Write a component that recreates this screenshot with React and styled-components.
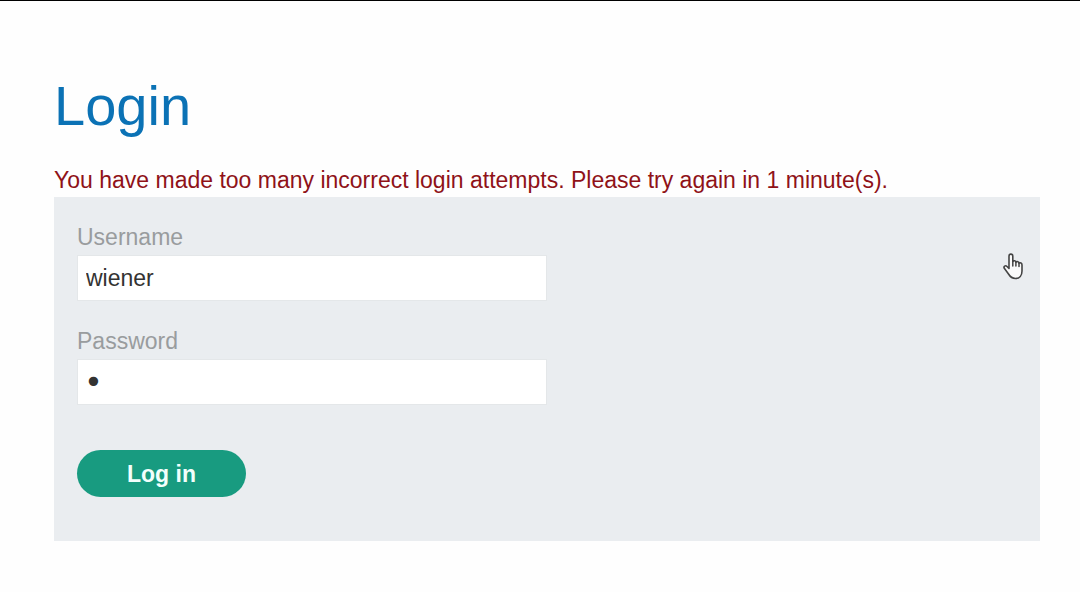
import React from 'react';
import styled, { createGlobalStyle } from 'styled-components';

const GlobalStyle = createGlobalStyle`
  *, *::before, *::after { box-sizing: border-box; }
  body {
    margin: 0;
    background: #fefefe;
    color: #333332;
    font-family: "Liberation Sans", Arial, sans-serif;
    font-size: 23px;
    line-height: 26px;
  }
`;

const Page = styled.main`
  border-top: 1px solid #000;
  padding: 73px 40px 50px 54px;
`;

const Title = styled.h1`
  margin: 0 0 29px;
  color: #0b72b5;
  font-size: 56px;
  font-weight: 400;
  line-height: 64px;
`;

const Warning = styled.p`
  margin: 0 0 4px;
  color: #8f1218;
`;

const Panel = styled.section`
  position: relative;
  background: #eaedf0;
  padding: 27px 23px 44px;
`;

const Form = styled.form`
  display: flex;
  flex-direction: column;
  align-items: flex-start;
  gap: 27px;
`;

const Field = styled.div`
  display: flex;
  flex-direction: column;
  gap: 5px;
  width: 50%;
`;

const Label = styled.label`
  color: #999c9e;
`;

const Input = styled.input`
  width: 100%;
  height: 46px;
  padding: 0 8px;
  border: 1px solid #e4e7e9;
  border-radius: 0;
  outline: none;
  background: #fff;
  color: #333332;
  font: inherit;

  &[type='password'] {
    padding: 0 6px;
    font-family: "DejaVu Sans", sans-serif;
    font-size: 32px;
  }
`;

const Button = styled.button`
  height: 47px;
  margin-top: 18px;
  padding: 0 50px;
  border: 0;
  border-radius: 24px;
  background: #189b80;
  color: #f2fffc;
  font: inherit;
  font-weight: 700;
  cursor: pointer;
`;

const Pointer = styled.svg`
  position: absolute;
  top: 56px;
  right: 17px;
  width: 20px;
  height: 27px;
`;

export default function App() {
  return (
    <>
      <GlobalStyle />
      <Page>
        <Title>Login</Title>
        <Warning role="alert">
          You have made too many incorrect login attempts. Please try again in 1 minute(s).
        </Warning>
        <Panel>
          <Form onSubmit={(e) => e.preventDefault()}>
            <Field>
              <Label htmlFor="username">Username</Label>
              <Input id="username" name="username" defaultValue="wiener" />
            </Field>
            <Field>
              <Label htmlFor="password">Password</Label>
              <Input id="password" name="password" type="password" defaultValue="a" />
            </Field>
            <Button type="submit">Log in</Button>
          </Form>
          <Pointer viewBox="0 0 20 27" aria-hidden="true">
            <path
              d="M6 15.500V3.200C6 .4 9.800 .4 9.800 3.200V8.500C10.600 7.200 12.900 7.600 12.900 9.200C13.800 8 16 8.600 16 10.200C17.200 9.200 19 10 19 12V18C19 22.500 16.500 25.500 12.500 25.500C8.500 25.500 7 23.500 5.500 21L1.300 15.300C.2 13.300 2.500 12 4 13.500Z"
              fill="#fafafa" stroke="#444" strokeWidth="1.600" strokeLinejoin="round"
            />
            <path d="M9.800 8V13M12.900 9V13M16 10V13.500" fill="none" stroke="#444" strokeWidth="1.500" strokeLinecap="round" />
          </Pointer>
        </Panel>
      </Page>
    </>
  );
}
